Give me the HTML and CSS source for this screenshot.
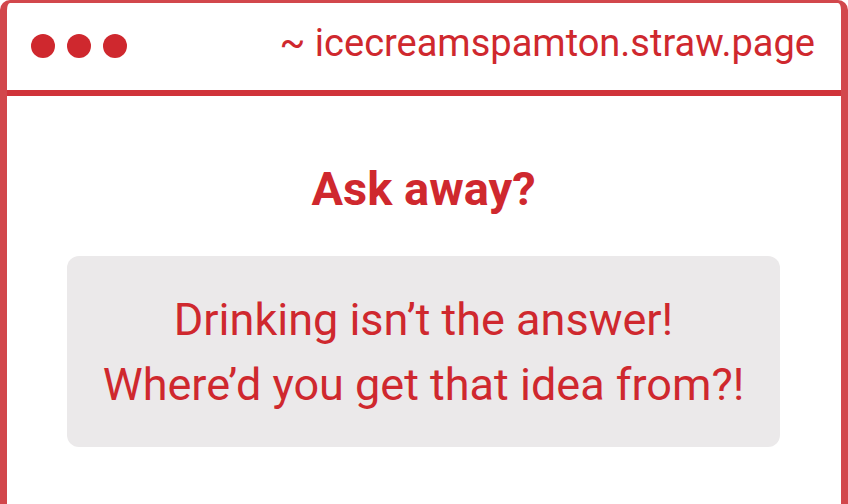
FILE: index.html
```html
<!DOCTYPE html>
<html lang="en">
<head>
  <meta charset="UTF-8" />
  <title>icecreamspamton.straw.page</title>
  <link rel="stylesheet" href="styles.css">
</head>
<body>
  <div class="window">
    <!-- Title bar -->
    <div class="titlebar">
      <div class="dots">
        <span class="dot"></span>
        <span class="dot"></span>
        <span class="dot"></span>
      </div>
      <div class="url">~ icecreamspamton.straw.page</div>
    </div>

    <div class="content">
      <h1>Ask away?</h1>
      <div class="answer">
        <p>Drinking isn’t the answer!</p>
        <p>Where’d you get that idea from?!</p>
      </div>
    </div>
  </div>
</body>
</html>
```

FILE: styles.css
```css
body {
  margin: 0;
  padding: 0;
  background-color: #fff;
  font-family: Roboto, "Liberation Sans", sans-serif;
  color: #cf282e;
}

.window {
  box-sizing: border-box;
  height: 504px;
  border-style: solid;
  border-color: #d2474c;
  border-width: 3px 7px 0 7px;
  border-radius: 10px 10px 0 0;
  overflow: hidden;
}

.titlebar {
  height: 87px;
  border-bottom: 6px solid #d0333a;
  display: flex;
  align-items: center;
  justify-content: space-between;
  padding: 0 26px 0 24px;
}

.dots {
  display: flex;
  gap: 12px;
  margin-bottom: 2px;
}

.dot {
  width: 24px;
  height: 24px;
  border-radius: 50%;
  background-color: #cf282e;
}

.url {
  font-size: 38px;
  margin-bottom: 7px;
}

.content {
  display: flex;
  flex-direction: column;
  align-items: center;
  padding: 0 61px 0 60px;
}

h1 {
  font-size: 47px;
  font-weight: 700;
  margin: 65px 0 0;
  line-height: 56px;
}

.answer {
  align-self: stretch;
  margin-top: 39px;
  height: 191px;
  box-sizing: border-box;
  padding: 31px 0 0;
  background-color: #ebe9ea;
  border-radius: 12px;
  text-align: center;
  font-size: 45px;
  line-height: 65px;
}

.answer p {
  margin: 0;
}
```
